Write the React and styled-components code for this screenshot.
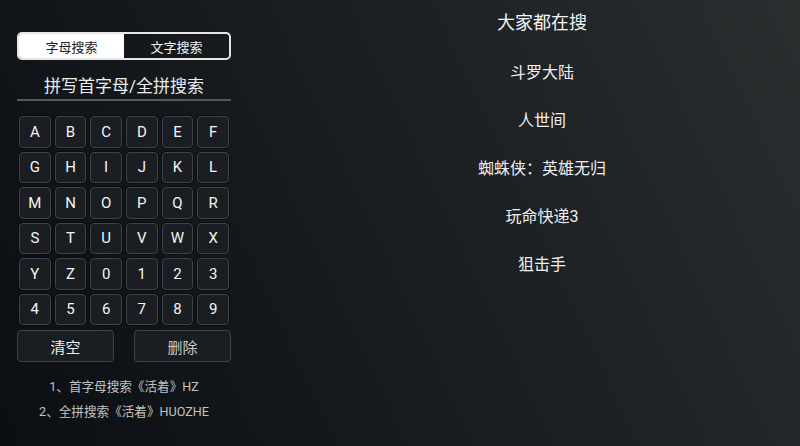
import React from "react";
import styled, { createGlobalStyle } from "styled-components";

const Global = createGlobalStyle`
  html, body { margin: 0; padding: 0; }
  body { font-family: Roboto, "Noto Sans CJK SC", sans-serif; }
`;

const Page = styled.div`
  width: 800px;
  height: 446px;
  overflow: hidden;
  display: flex;
  background: linear-gradient(65deg, #0b0f13 0%, #15191d 35%, #1f2225 65%, #2b2e2f 100%);
  color: #f2f2f2;
  font-family: Roboto, "Noto Sans CJK SC", sans-serif;
`;

const Left = styled.div`
  width: 214px;
  padding: 32px 0 0 17px;
  display: flex;
  flex-direction: column;
`;

const Toggle = styled.div`
  display: flex;
  height: 28px;
  box-sizing: border-box;
  border: 2px solid #e6e6e6;
  border-radius: 5px;
  overflow: hidden;
`;

const Tab = styled.div`
  flex: 1;
  display: flex;
  align-items: center;
  justify-content: center;
  font-size: 13px;
  background: ${(p) => (p.$active ? "#ffffff" : "transparent")};
  color: ${(p) => (p.$active ? "#222" : "#f0f0f0")};
`;

const Title = styled.div`
  margin-top: 13px;
  height: 26px;
  line-height: 26px;
  text-align: center;
  font-size: 17px;
  color: #ececec;
  border-bottom: 2px solid #55595d;
`;

const Keys = styled.div`
  margin-top: 13px;
  display: grid;
  grid-template-columns: repeat(6, 1fr);
  grid-auto-rows: 35.5px;
`;

const Key = styled.div`
  margin: 2px;
  display: flex;
  align-items: center;
  justify-content: center;
  border: 1px solid #3d434a;
  border-radius: 4px;
  background: #1a1e23;
  box-shadow: 0 0 0 1px rgba(0,0,0,0.35);
  font-size: 15px;
  color: #f4f4f4;
`;

const Actions = styled.div`
  margin-top: 3px;
  display: flex;
  justify-content: space-between;
`;

const ActionBtn = styled.div`
  width: 97px;
  height: 32px;
  box-sizing: border-box;
  display: flex;
  align-items: center;
  justify-content: center;
  border: 1px solid #3d434a;
  border-radius: 4px;
  background: #1a1e23;
  font-size: 15px;
  color: ${(p) => (p.$dim ? "#c8c8c8" : "#ededed")};
`;

const Hints = styled.div`
  margin-top: 16px;
  display: flex;
  flex-direction: column;
  align-items: center;
  gap: 7px;
  font-size: 12.6px;
  color: #c2c2c2;
  line-height: 18px;
`;

const Right = styled.div`
  flex: 1;
  margin-left: 53px;
  display: flex;
  flex-direction: column;
  align-items: center;
  padding-top: 11px;
`;

const Heading = styled.div`
  font-size: 18px;
  line-height: 24px;
  color: #f4f4f4;
`;

const Item = styled.div`
  margin-top: ${(p) => (p.$first ? "26px" : "24px")};
  font-size: 16px;
  line-height: 24px;
  color: #efefef;
`;

const keys = "ABCDEFGHIJKLMNOPQRSTUVWXYZ0123456789".split("");
const hot = ["斗罗大陆", "人世间", "蜘蛛侠：英雄无归", "玩命快递3", "狙击手"];

export default function App() {
  return (
    <Page>
      <Global />
      <Left>
        <Toggle>
          <Tab $active>字母搜索</Tab>
          <Tab>文字搜索</Tab>
        </Toggle>
        <Title>拼写首字母/全拼搜索</Title>
        <Keys>
          {keys.map((k) => (
            <Key key={k}>{k}</Key>
          ))}
        </Keys>
        <Actions>
          <ActionBtn>清空</ActionBtn>
          <ActionBtn $dim>删除</ActionBtn>
        </Actions>
        <Hints>
          <div>1、首字母搜索《活着》HZ</div>
          <div>2、全拼搜索《活着》HUOZHE</div>
        </Hints>
      </Left>
      <Right>
        <Heading>大家都在搜</Heading>
        {hot.map((h, i) => (
          <Item key={h} $first={i === 0}>
            {h}
          </Item>
        ))}
      </Right>
    </Page>
  );
}
